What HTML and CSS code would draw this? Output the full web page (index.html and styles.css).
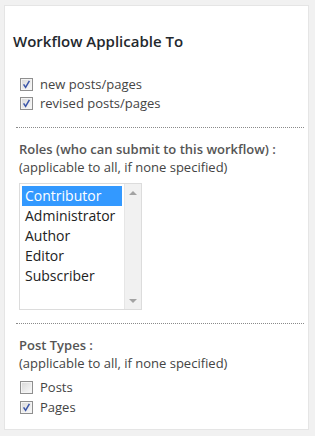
FILE: index.html
```html
<!doctype html>
<html>

<head>
  <title>Workflow Applicable To</title>
  <meta http-equiv="Content-Type" content="text/html; charset=UTF-8">
  <link rel="stylesheet" href="styles.css">
</head>

<body>
  <div class="panel">
    <h3 class="title">Workflow Applicable To</h3>

    <div class="checks first">
      <label class="check">
        <span class="box"><svg viewBox="0 0 13 13" width="13" height="13"><path d="M3.6 6.4 L5.6 9.4 L9.4 2.8" /></svg></span>
        new posts/pages
      </label>
      <label class="check">
        <span class="box"><svg viewBox="0 0 13 13" width="13" height="13"><path d="M3.6 6.4 L5.6 9.4 L9.4 2.8" /></svg></span>
        revised posts/pages
      </label>
    </div>

    <div class="section">
      <div class="label">Roles (who can submit to this workflow) :</div>
      <div class="hint">(applicable to all, if none specified)</div>
      <div class="listbox">
        <div class="options">
          <div class="option selected">Contributor</div>
          <div class="option">Administrator</div>
          <div class="option">Author</div>
          <div class="option">Editor</div>
          <div class="option">Subscriber</div>
        </div>
        <div class="scrollbar">
          <span class="arrow up"></span>
          <span class="arrow down"></span>
        </div>
      </div>
    </div>

    <div class="section last">
      <div class="label">Post Types :</div>
      <div class="hint">(applicable to all, if none specified)</div>
      <div class="checks types">
        <label class="check">
          <span class="box"></span>
          Posts
        </label>
        <label class="check">
          <span class="box"><svg viewBox="0 0 13 13" width="13" height="13"><path d="M3.6 6.4 L5.6 9.4 L9.4 2.8" /></svg></span>
          Pages
        </label>
      </div>
    </div>
  </div>
</body>

</html>
```

FILE: styles.css
```css
html,
body {
  margin: 0;
  background-color: #f1f1f1;
  font-family: 'Open Sans', sans-serif;
  font-size: 13px;
  color: #444;
}

body {
  padding: 5px 0 0 4px;
}

.panel {
  box-sizing: border-box;
  width: 305px;
  background-color: #fff;
  border: 1px solid #e5e5e5;
  padding-bottom: 12px;
}

.title {
  margin: 25px 0 0 8px;
  font-size: 15px;
  font-weight: 600;
  line-height: 20px;
  color: #23282d;
}

.checks.first {
  margin: 24px 0 0 15px;
}

.check {
  display: flex;
  align-items: center;
  height: 19px;
  line-height: 19px;
}

.checks.types {
  margin: 5px 0 0 1px;
}

.checks.types .check {
  height: 20px;
  line-height: 20px;
}

.box {
  box-sizing: border-box;
  width: 13px;
  height: 13px;
  margin-right: 7px;
  border: 1px solid #8f8f8f;
  background: linear-gradient(135deg, #d8d8d8, #fbfbfb);
  box-shadow: inset 0 0 0 1px #f4f4f4;
  position: relative;
}

.box svg {
  position: absolute;
  left: -1px;
  top: -1px;
}

.box path {
  fill: none;
  stroke: #3a55a8;
  stroke-width: 1.5;
}

.section {
  margin: 14px 4px 0 11px;
  padding: 12px 0 13px 3px;
  border-top: 1px dotted #8a8a8a;
}

.section.last {
  margin-top: 0;
  padding-bottom: 0;
}

.label {
  font-weight: 600;
  line-height: 18px;
  color: #555;
}

.hint {
  line-height: 18px;
}

.listbox {
  box-sizing: border-box;
  display: flex;
  width: 123px;
  height: 127px;
  margin-top: 7px;
  border: 1px solid #dcdcdc;
  background-color: #fff;
}

.options {
  flex: 1;
  padding: 2px 2px 0 2px;
}

.option {
  height: 20px;
  line-height: 20px;
  padding-left: 3px;
  font-size: 14px;
  color: #222;
}

.option.selected {
  background-color: #3399ff;
  color: #fff;
}

.scrollbar {
  width: 16px;
  background-color: #f1f1f1;
  border-left: 1px solid #e6e6e6;
  display: flex;
  flex-direction: column;
  justify-content: space-between;
  align-items: center;
  padding: 7px 0 6px;
}

.arrow {
  width: 0;
  height: 0;
  border-left: 4px solid transparent;
  border-right: 4px solid transparent;
}

.arrow.up {
  border-bottom: 4px solid #a3a3a3;
}

.arrow.down {
  border-top: 4px solid #a3a3a3;
}
```
